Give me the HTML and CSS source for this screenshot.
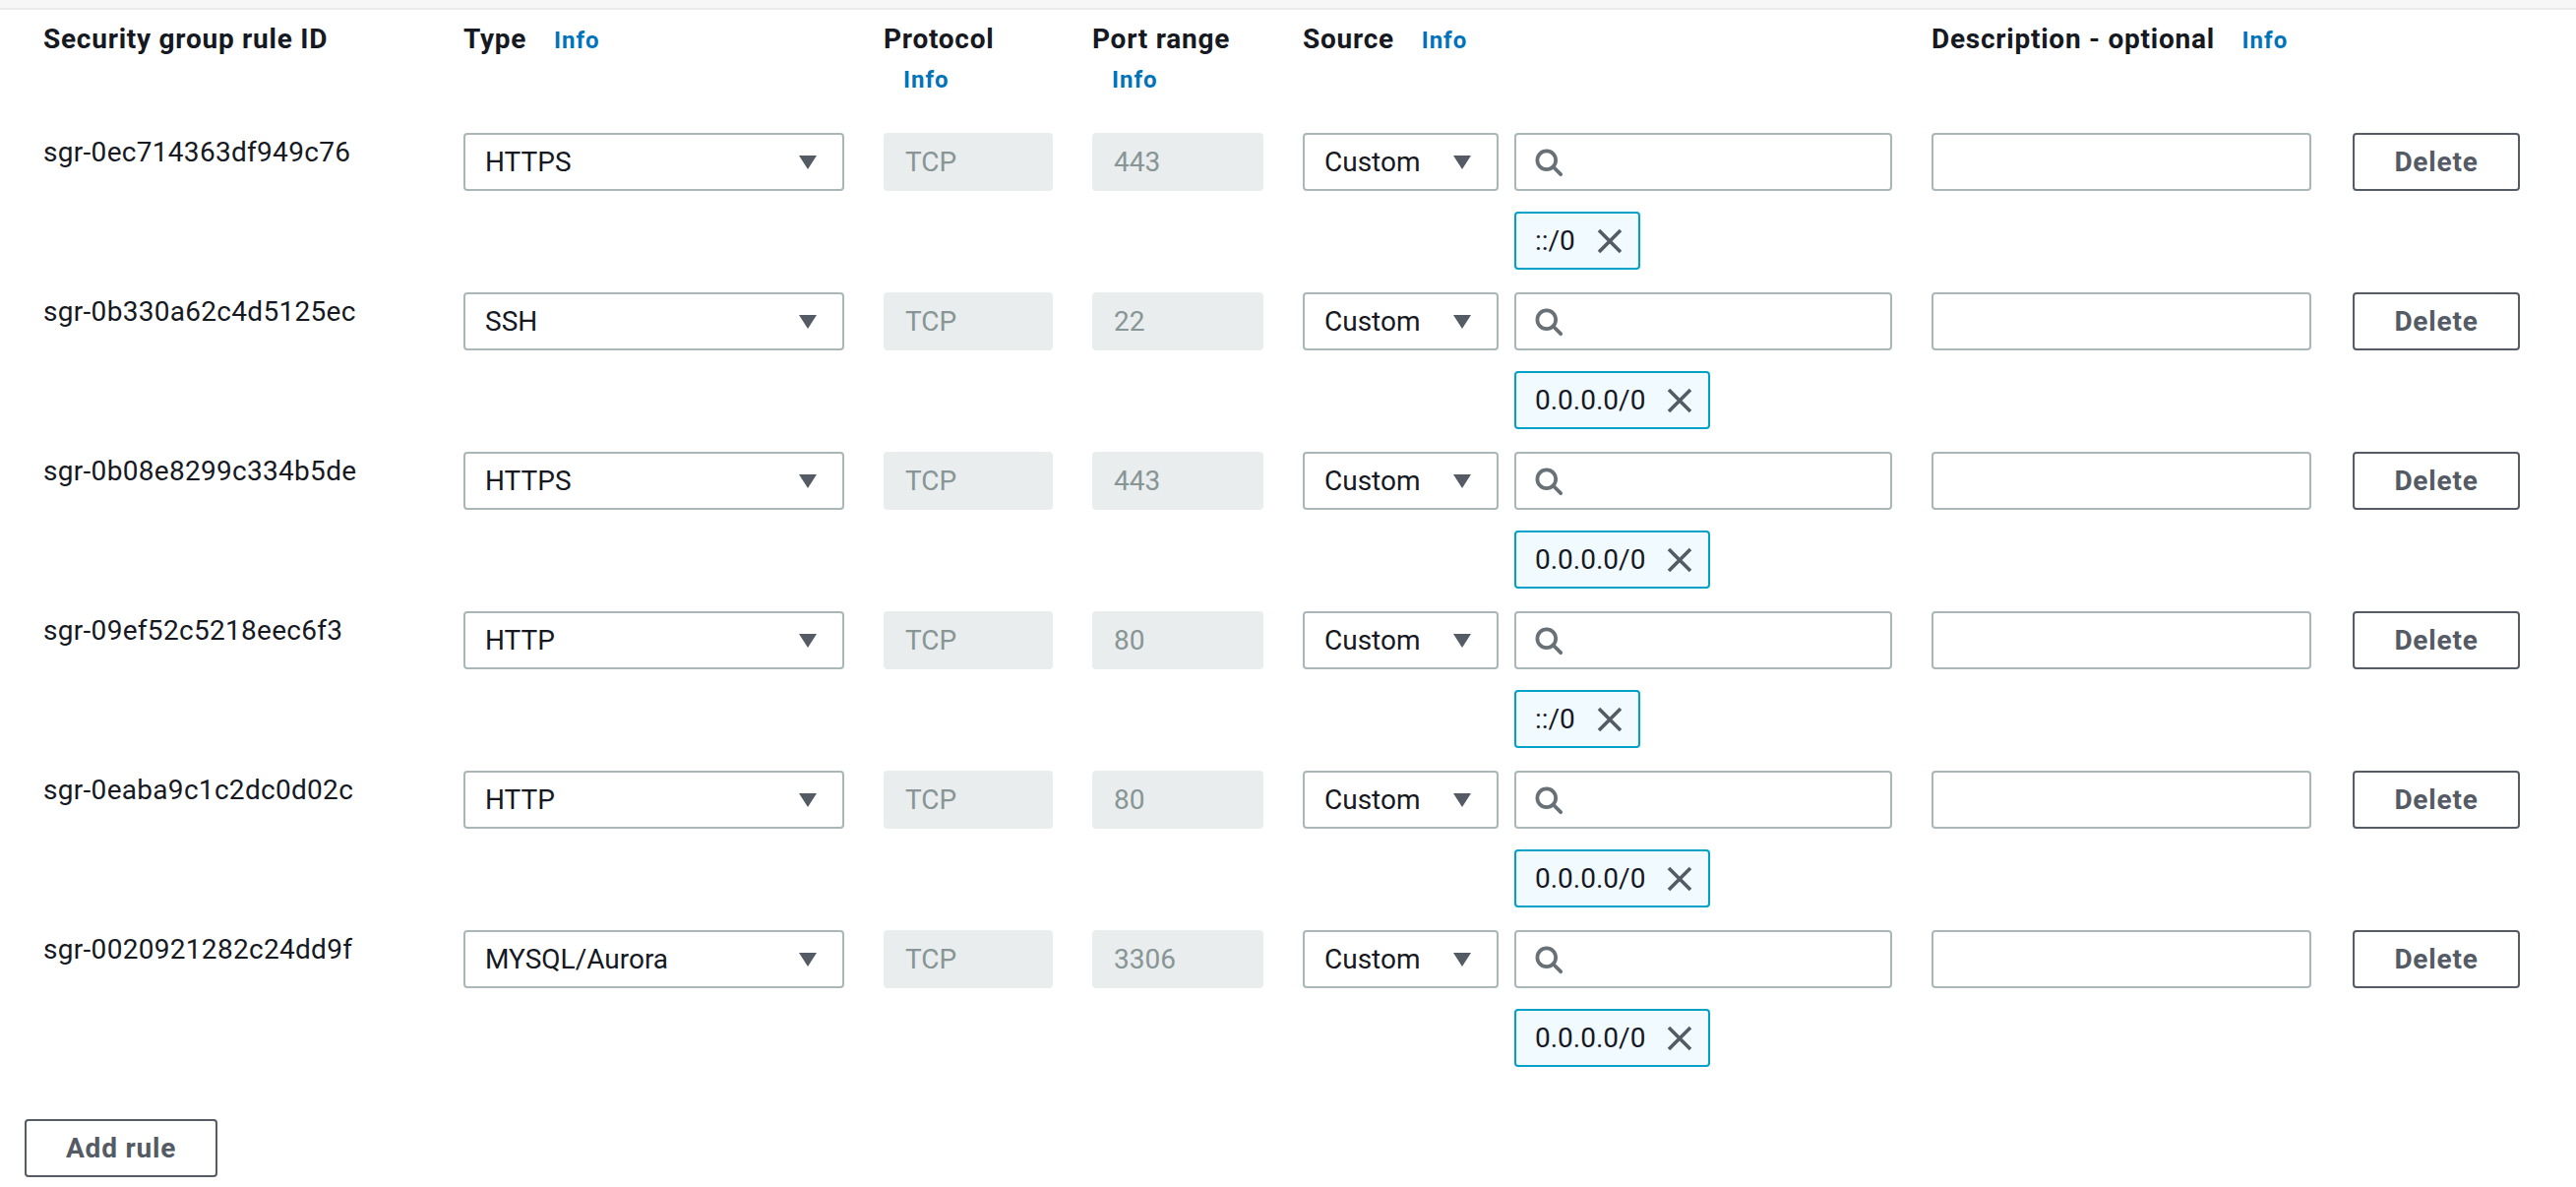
FILE: index.html
```html
<!DOCTYPE html>
<html lang="en">
<head>
<meta charset="utf-8">
<title>Inbound rules</title>
<link rel="stylesheet" href="styles.css">
</head>
<body>
<div class="topbar"></div>

<div class="rules">
  <div class="row head">
    <div class="hcell">Security group rule ID</div>
    <div class="hcell">Type <a class="info">Info</a></div>
    <div class="hcell">Protocol <a class="info">Info</a></div>
    <div class="hcell">Port range <a class="info">Info</a></div>
    <div class="hcell">Source <a class="info">Info</a></div>
    <div class="hcell">Description - optional <a class="info">Info</a></div>
    <div class="hcell"></div>
  </div>

  <div class="row rule">
    <div class="id">sgr-0ec714363df949c76</div>
    <div class="select"><span>HTTPS</span><svg class="caret" width="20" height="16" viewBox="0 0 20 16"><path d="M1 1h18L10 15z"/></svg></div>
    <div class="ro">TCP</div>
    <div class="ro">443</div>
    <div class="source">
      <div class="select"><span>Custom</span><svg class="caret" width="20" height="16" viewBox="0 0 20 16"><path d="M1 1h18L10 15z"/></svg></div>
      <div class="search"><svg class="mag" width="30" height="30" viewBox="0 0 16 16"><circle cx="6.8" cy="6.8" r="5"/><path d="M10.4 10.4L14.5 14.5"/></svg></div>
      <div class="token"><span>::/0</span><svg class="x" width="26" height="26" viewBox="0 0 26 26"><path d="M2 2L24 24M24 2L2 24"/></svg></div>
    </div>
    <div class="text"></div>
    <div class="act"><button class="btn">Delete</button></div>
  </div>

  <div class="row rule">
    <div class="id">sgr-0b330a62c4d5125ec</div>
    <div class="select"><span>SSH</span><svg class="caret" width="20" height="16" viewBox="0 0 20 16"><path d="M1 1h18L10 15z"/></svg></div>
    <div class="ro">TCP</div>
    <div class="ro">22</div>
    <div class="source">
      <div class="select"><span>Custom</span><svg class="caret" width="20" height="16" viewBox="0 0 20 16"><path d="M1 1h18L10 15z"/></svg></div>
      <div class="search"><svg class="mag" width="30" height="30" viewBox="0 0 16 16"><circle cx="6.8" cy="6.8" r="5"/><path d="M10.4 10.4L14.5 14.5"/></svg></div>
      <div class="token"><span>0.0.0.0/0</span><svg class="x" width="26" height="26" viewBox="0 0 26 26"><path d="M2 2L24 24M24 2L2 24"/></svg></div>
    </div>
    <div class="text"></div>
    <div class="act"><button class="btn">Delete</button></div>
  </div>

  <div class="row rule">
    <div class="id">sgr-0b08e8299c334b5de</div>
    <div class="select"><span>HTTPS</span><svg class="caret" width="20" height="16" viewBox="0 0 20 16"><path d="M1 1h18L10 15z"/></svg></div>
    <div class="ro">TCP</div>
    <div class="ro">443</div>
    <div class="source">
      <div class="select"><span>Custom</span><svg class="caret" width="20" height="16" viewBox="0 0 20 16"><path d="M1 1h18L10 15z"/></svg></div>
      <div class="search"><svg class="mag" width="30" height="30" viewBox="0 0 16 16"><circle cx="6.8" cy="6.8" r="5"/><path d="M10.4 10.4L14.5 14.5"/></svg></div>
      <div class="token"><span>0.0.0.0/0</span><svg class="x" width="26" height="26" viewBox="0 0 26 26"><path d="M2 2L24 24M24 2L2 24"/></svg></div>
    </div>
    <div class="text"></div>
    <div class="act"><button class="btn">Delete</button></div>
  </div>

  <div class="row rule">
    <div class="id">sgr-09ef52c5218eec6f3</div>
    <div class="select"><span>HTTP</span><svg class="caret" width="20" height="16" viewBox="0 0 20 16"><path d="M1 1h18L10 15z"/></svg></div>
    <div class="ro">TCP</div>
    <div class="ro">80</div>
    <div class="source">
      <div class="select"><span>Custom</span><svg class="caret" width="20" height="16" viewBox="0 0 20 16"><path d="M1 1h18L10 15z"/></svg></div>
      <div class="search"><svg class="mag" width="30" height="30" viewBox="0 0 16 16"><circle cx="6.8" cy="6.8" r="5"/><path d="M10.4 10.4L14.5 14.5"/></svg></div>
      <div class="token"><span>::/0</span><svg class="x" width="26" height="26" viewBox="0 0 26 26"><path d="M2 2L24 24M24 2L2 24"/></svg></div>
    </div>
    <div class="text"></div>
    <div class="act"><button class="btn">Delete</button></div>
  </div>

  <div class="row rule">
    <div class="id">sgr-0eaba9c1c2dc0d02c</div>
    <div class="select"><span>HTTP</span><svg class="caret" width="20" height="16" viewBox="0 0 20 16"><path d="M1 1h18L10 15z"/></svg></div>
    <div class="ro">TCP</div>
    <div class="ro">80</div>
    <div class="source">
      <div class="select"><span>Custom</span><svg class="caret" width="20" height="16" viewBox="0 0 20 16"><path d="M1 1h18L10 15z"/></svg></div>
      <div class="search"><svg class="mag" width="30" height="30" viewBox="0 0 16 16"><circle cx="6.8" cy="6.8" r="5"/><path d="M10.4 10.4L14.5 14.5"/></svg></div>
      <div class="token"><span>0.0.0.0/0</span><svg class="x" width="26" height="26" viewBox="0 0 26 26"><path d="M2 2L24 24M24 2L2 24"/></svg></div>
    </div>
    <div class="text"></div>
    <div class="act"><button class="btn">Delete</button></div>
  </div>

  <div class="row rule">
    <div class="id">sgr-0020921282c24dd9f</div>
    <div class="select"><span>MYSQL/Aurora</span><svg class="caret" width="20" height="16" viewBox="0 0 20 16"><path d="M1 1h18L10 15z"/></svg></div>
    <div class="ro">TCP</div>
    <div class="ro">3306</div>
    <div class="source">
      <div class="select"><span>Custom</span><svg class="caret" width="20" height="16" viewBox="0 0 20 16"><path d="M1 1h18L10 15z"/></svg></div>
      <div class="search"><svg class="mag" width="30" height="30" viewBox="0 0 16 16"><circle cx="6.8" cy="6.8" r="5"/><path d="M10.4 10.4L14.5 14.5"/></svg></div>
      <div class="token"><span>0.0.0.0/0</span><svg class="x" width="26" height="26" viewBox="0 0 26 26"><path d="M2 2L24 24M24 2L2 24"/></svg></div>
    </div>
    <div class="text"></div>
    <div class="act"><button class="btn">Delete</button></div>
  </div>
</div>

<div class="footer">
  <button class="btn add">Add rule</button>
</div>
</body>
</html>
```

FILE: styles.css
```css
html, body {
  margin: 0;
  padding: 0;
  background: #ffffff;
}

body {
  font-family: "Roboto", "Liberation Sans", sans-serif;
  font-size: 28px;
  line-height: 40px;
  color: #16191f;
  height: 1206px;
  overflow: hidden;
}

.topbar {
  height: 8px;
  background: #f7f7f7;
  border-bottom: 2px solid #ebebeb;
}

.rules {
  padding-left: 44px;
  margin-top: 10px;
}

.row {
  display: grid;
  grid-template-columns: 387px 387px 172px 174px 599px 386px 172px;
  column-gap: 40px;
}

.head {
  margin-bottom: 34px;
}

.hcell {
  font-weight: 700;
  color: #16191f;
  letter-spacing: 0.75px;
}

.info {
  display: inline-block;
  margin-left: 20px;
  font-size: 24px;
  font-weight: 700;
  letter-spacing: 1px;
  color: #0073bb;
  cursor: pointer;
}

.rule {
  padding-bottom: 23px;
  align-items: start;
}

.id {
  letter-spacing: 0.3px;
}

.select,
.ro,
.search,
.text {
  box-sizing: border-box;
  height: 59px;
  border: 2px solid #aab7b8;
  border-radius: 4px;
  background: #ffffff;
  display: flex;
  align-items: center;
}

.select {
  justify-content: space-between;
  padding: 0 25px 0 20px;
}

.caret path {
  fill: #545b64;
}

.ro {
  background: #eaeded;
  border-color: #eaeded;
  color: #879596;
  padding: 0 20px;
}

.search {
  padding: 0 18px;
}

.mag circle,
.mag path {
  fill: none;
  stroke: #687078;
  stroke-width: 2;
  stroke-linecap: round;
}

.source {
  display: grid;
  grid-template-columns: 199px 1fr;
  column-gap: 16px;
  row-gap: 21px;
}

.token {
  grid-column: 2;
  justify-self: start;
  box-sizing: border-box;
  height: 59px;
  display: flex;
  align-items: center;
  gap: 22px;
  padding: 0 16px 0 19px;
  background: #f1faff;
  border: 2px solid #00a1c9;
  border-radius: 4px;
}

.x path {
  stroke: #545b64;
  stroke-width: 3.6;
  fill: none;
}

.btn {
  box-sizing: border-box;
  height: 59px;
  border: 2px solid #545b64;
  border-radius: 4px;
  background: #ffffff;
  color: #545b64;
  font-family: inherit;
  font-size: 28px;
  font-weight: 700;
  letter-spacing: 0.8px;
  line-height: 40px;
  cursor: pointer;
}

.act {
  padding-left: 2px;
}

.act .btn {
  width: 100%;
}

.footer {
  padding-left: 25px;
  margin-top: 30px;
}

.add {
  padding: 0 40px;
}
```
